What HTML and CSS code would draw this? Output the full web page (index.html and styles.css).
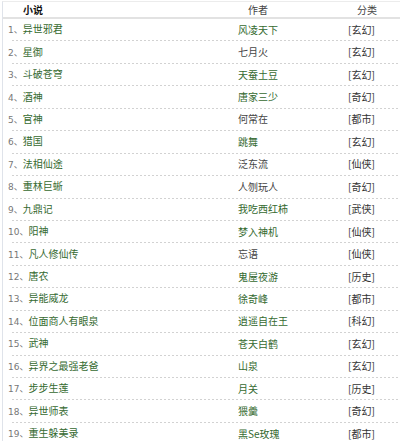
FILE: index.html
```html
<!DOCTYPE html>
<html lang="zh">
<head>
<meta charset="utf-8">
<link rel="stylesheet" href="styles.css">
</head>
<body>
<div class="list">
  <div class="row head">
    <span class="c-title"><b>小说</b></span>
    <span class="c-author h">作者</span>
    <span class="c-cat h">分类</span>
  </div>
  <div class="row"><span class="c-title"><i>1、</i><a>异世邪君</a></span><span class="c-author">风凌天下</span><span class="c-cat">[玄幻]</span></div>
  <div class="row"><span class="c-title"><i>2、</i><a>星御</a></span><span class="c-author g">七月火</span><span class="c-cat">[玄幻]</span></div>
  <div class="row"><span class="c-title"><i>3、</i><a>斗破苍穹</a></span><span class="c-author">天蚕土豆</span><span class="c-cat">[玄幻]</span></div>
  <div class="row"><span class="c-title"><i>4、</i><a>酒神</a></span><span class="c-author">唐家三少</span><span class="c-cat">[奇幻]</span></div>
  <div class="row"><span class="c-title"><i>5、</i><a>官神</a></span><span class="c-author g">何常在</span><span class="c-cat">[都市]</span></div>
  <div class="row"><span class="c-title"><i>6、</i><a>猎国</a></span><span class="c-author">跳舞</span><span class="c-cat">[玄幻]</span></div>
  <div class="row"><span class="c-title"><i>7、</i><a>法相仙途</a></span><span class="c-author g">泛东流</span><span class="c-cat">[仙侠]</span></div>
  <div class="row"><span class="c-title"><i>8、</i><a>重林巨蜥</a></span><span class="c-author g">人刎玩人</span><span class="c-cat">[奇幻]</span></div>
  <div class="row"><span class="c-title"><i>9、</i><a>九鼎记</a></span><span class="c-author">我吃西红柿</span><span class="c-cat">[武侠]</span></div>
  <div class="row"><span class="c-title"><i>10、</i><a>阳神</a></span><span class="c-author">梦入神机</span><span class="c-cat">[仙侠]</span></div>
  <div class="row"><span class="c-title"><i>11、</i><a>凡人修仙传</a></span><span class="c-author g">忘语</span><span class="c-cat">[仙侠]</span></div>
  <div class="row"><span class="c-title"><i>12、</i><a>唐农</a></span><span class="c-author">鬼屋夜游</span><span class="c-cat">[历史]</span></div>
  <div class="row"><span class="c-title"><i>13、</i><a>异能威龙</a></span><span class="c-author">徐奇峰</span><span class="c-cat">[都市]</span></div>
  <div class="row"><span class="c-title"><i>14、</i><a>位面商人有眼泉</a></span><span class="c-author">逍遥自在王</span><span class="c-cat">[科幻]</span></div>
  <div class="row"><span class="c-title"><i>15、</i><a>武神</a></span><span class="c-author">苍天白鹤</span><span class="c-cat">[玄幻]</span></div>
  <div class="row"><span class="c-title"><i>16、</i><a>异界之最强老爸</a></span><span class="c-author">山泉</span><span class="c-cat">[玄幻]</span></div>
  <div class="row"><span class="c-title"><i>17、</i><a>步步生莲</a></span><span class="c-author">月关</span><span class="c-cat">[历史]</span></div>
  <div class="row"><span class="c-title"><i>18、</i><a>异世师表</a></span><span class="c-author">猥羹</span><span class="c-cat">[奇幻]</span></div>
  <div class="row"><span class="c-title"><i>19、</i><a>重生躲美录</a></span><span class="c-author">黑Se玫瑰</span><span class="c-cat">[都市]</span></div>
</div>
</body>
</html>
```
FILE: styles.css
```css
html, body {
  margin: 0;
  padding: 0;
  background: #fff;
}
body {
  font-family: "Noto Sans CJK SC", "Noto Sans", sans-serif;
  font-size: 10px;
  color: #333;
}
.list {
  margin: 1px 0 0 2px;
  border-left: 1px solid #dfe3ea;
  border-top: 1px solid #ececec;
}
.row {
  display: grid;
  grid-template-columns: 235px 109px 1fr;
  align-items: center;
  height: 21.44px;
  line-height: 14px;
  padding-bottom: 1px;
  background: repeating-linear-gradient(to right, #d2d2d2 0 2px, transparent 2px 4px) left 9px bottom / calc(100% - 9px) 1px no-repeat;
  white-space: nowrap;
}
.row.head {
  height: 15px;
  padding-bottom: 0;
  background: none;
  border-bottom: 2px solid #e2e2e2;
}
.head b {
  font-weight: bold;
  color: #111;
  padding-left: 15px;
}
.head .h {
  padding-left: 10px;
  color: #444;
}
.c-title {
  padding-left: 5px;
}
.c-title i {
  font-style: normal;
  color: #777;
  font-family: "DejaVu Sans", "Noto Sans CJK SC", sans-serif;
  font-size: 9px;
}
.c-title a {
  color: #356a30;
}
.c-author {
  color: #356a30;
}
.c-author.g {
  color: #444;
}
.c-cat {
  padding-left: 1px;
  color: #333;
}
```
